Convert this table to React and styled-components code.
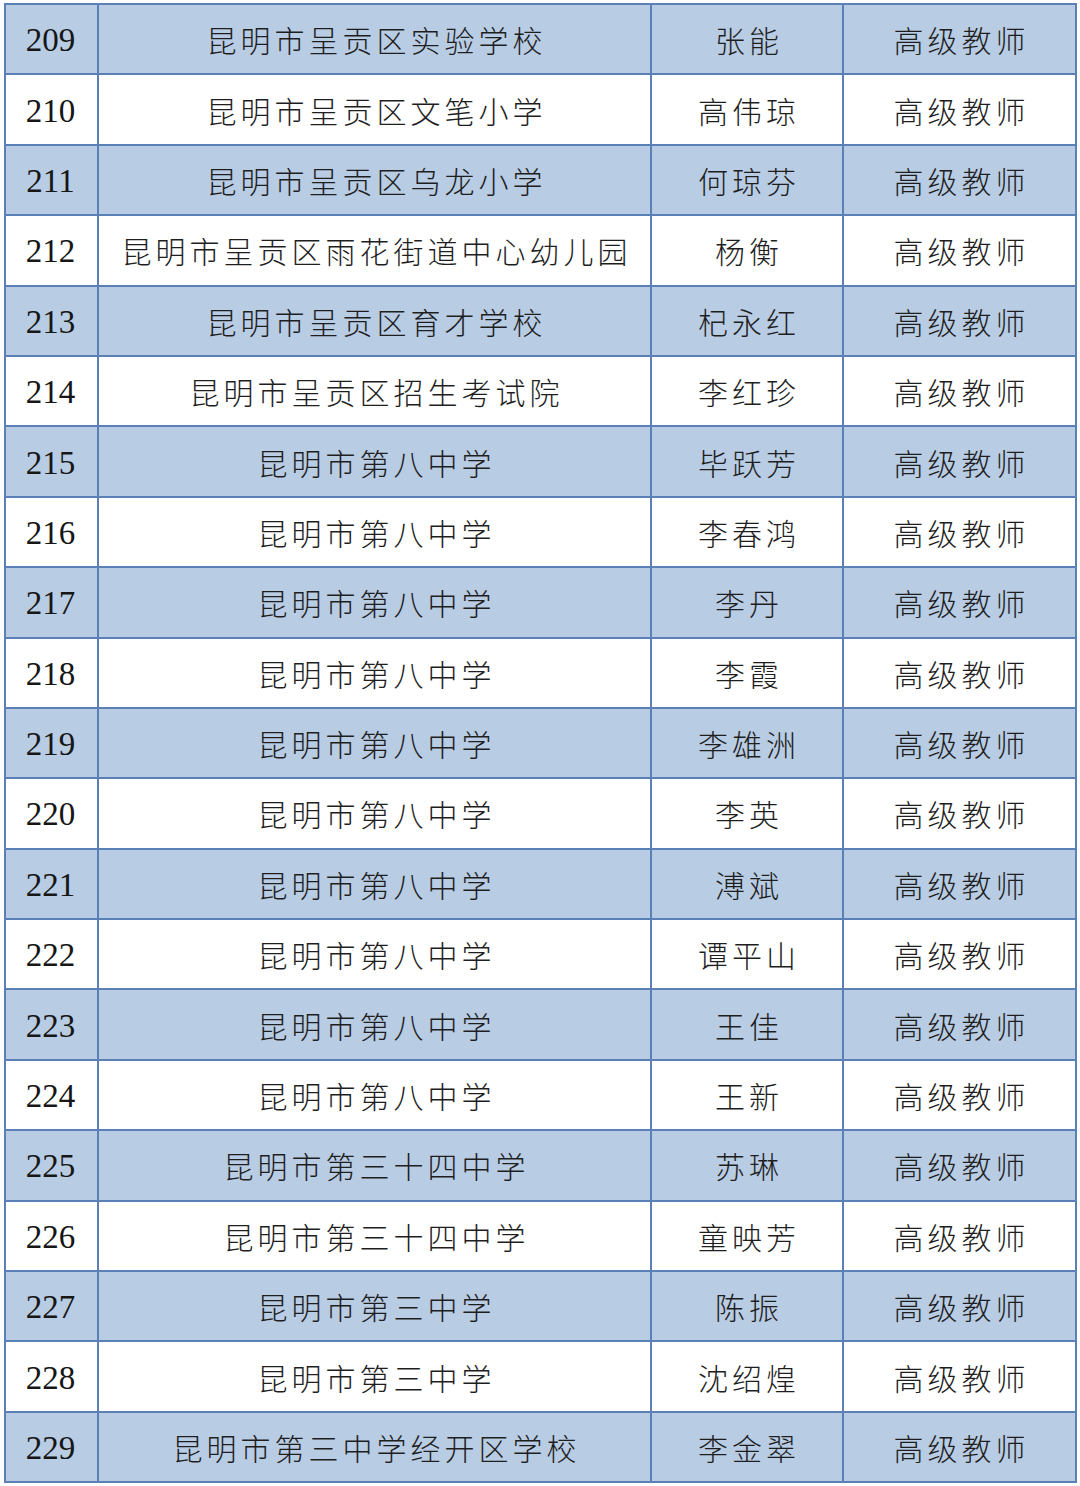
import React from 'react'
import styled, { createGlobalStyle } from 'styled-components'

const rows = [
    [209, '昆明市呈贡区实验学校', '张能'],
    [210, '昆明市呈贡区文笔小学', '高伟琼'],
    [211, '昆明市呈贡区乌龙小学', '何琼芬'],
    [212, '昆明市呈贡区雨花街道中心幼儿园', '杨衡'],
    [213, '昆明市呈贡区育才学校', '杞永红'],
    [214, '昆明市呈贡区招生考试院', '李红珍'],
    [215, '昆明市第八中学', '毕跃芳'],
    [216, '昆明市第八中学', '李春鸿'],
    [217, '昆明市第八中学', '李丹'],
    [218, '昆明市第八中学', '李霞'],
    [219, '昆明市第八中学', '李雄洲'],
    [220, '昆明市第八中学', '李英'],
    [221, '昆明市第八中学', '溥斌'],
    [222, '昆明市第八中学', '谭平山'],
    [223, '昆明市第八中学', '王佳'],
    [224, '昆明市第八中学', '王新'],
    [225, '昆明市第三十四中学', '苏琳'],
    [226, '昆明市第三十四中学', '童映芳'],
    [227, '昆明市第三中学', '陈振'],
    [228, '昆明市第三中学', '沈绍煌'],
    [229, '昆明市第三中学经开区学校', '李金翠'],
]

const GlobalStyle = createGlobalStyle`
    body{
        margin : 0;
        background : #fff;
    }
`

function App() {
    return (
        <Page>
            <GlobalStyle />
            <Grid>
                {rows.map(([no, school, name], i) => (
                    <React.Fragment key={no}>
                        <NumCell shaded={i % 2 === 0}>{no}</NumCell>
                        <TextCell shaded={i % 2 === 0}>{school}</TextCell>
                        <TextCell shaded={i % 2 === 0}>{name}</TextCell>
                        <TextCell shaded={i % 2 === 0}>高级教师</TextCell>
                    </React.Fragment>
                ))}
            </Grid>
        </Page>
    )
}

export default App

const Page = styled.div`
    width : 1080px;
    height : 1486px;
    padding : 3px 0 0 4px;
    box-sizing : border-box;
    background : #fff;
`

const Grid = styled.div`
    display : inline-grid;
    grid-template-columns : 91px 551px 190px 231px;
    grid-auto-rows : 68.4px;
    gap : 2px;
    padding : 2px;
    background-color : #5b80b7;
`

const Cell = styled.div`
    display : flex;
    align-items : center;
    justify-content : center;
    white-space : nowrap;
    color : #161616;
    background-color : ${props => (props.shaded ? '#b8cce4' : '#ffffff')};
`

const NumCell = styled(Cell)`
    font-family : "Liberation Serif", "Times New Roman", serif;
    font-size : 33px;
    padding-top : 3px;
    padding-right : 2px;
`

const TextCell = styled(Cell)`
    font-family : "Noto Sans CJK SC", sans-serif;
    font-weight : 300;
    font-size : 30px;
    letter-spacing : 4px;
    padding-left : 4px;
    color : #1e1e1e;
`
